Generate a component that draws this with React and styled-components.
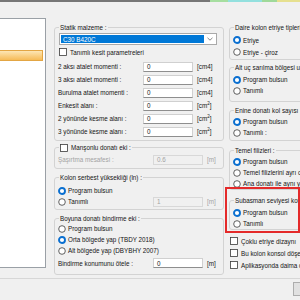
import React from "react"
import styled, { createGlobalStyle } from "styled-components"

const GlobalStyle = createGlobalStyle`
  * { box-sizing: border-box; }
  html, body { margin: 0; padding: 0; background: #f0f0f0; }
  body { font-family: "Liberation Sans", Arial, sans-serif; }
`

const Screen = styled.div`
  width: 300px;
  height: 300px;
  overflow: hidden;
  background: #f0f0f0;
  font-size: 6.3px;
  color: #141414;
  display: flex;
  flex-direction: column;
`

const TopStrip = styled.div`
  display: flex;
  height: 2px;
  flex: none;
`

const StripSeg = styled.div`
  width: ${p => p.$w}px;
  background: ${p => p.$c};
  flex: none;
`

const Body = styled.div`
  display: flex;
  align-items: flex-start;
  height: 276px;
  flex: none;
`

const TreeList = styled.div`
  width: 46px;
  height: 250px;
  margin-top: 16px;
  background: #fff;
  border: 1px solid #9aa0a6;
  border-left: none;
  flex: none;
`

const TreeItem = styled.div`
  width: 43px;
  height: 11px;
  margin-top: 31px;
  background: linear-gradient(#fde6b4, #f6bb57);
  border: 1px solid #e3a644;
  border-left: none;
`

const Column = styled.div`
  width: ${p => p.$w}px;
  margin-left: ${p => p.$ml}px;
  padding-top: 25px;
  flex: none;
  display: flex;
  flex-direction: column;
`

const Group = styled.div`
  border: 1px solid #d3d3d3;
  border-radius: 3px;
  padding: 0 3px ${p => p.$pb || 0}px;
  margin-top: ${p => p.$mt || 0}px;
  width: ${p => (p.$w ? `${p.$w}px` : "auto")};
`

const Legend = styled.div`
  display: flex;
  align-items: center;
  gap: 2px;
  width: fit-content;
  height: 7px;
  line-height: 7px;
  margin: -4px 0 0 ${p => p.$ml ?? 1}px;
  padding: 0 1px;
  background: #f0f0f0;
  white-space: nowrap;
`

const Rows = styled.div`
  margin-top: ${p => p.$mt || 0}px;
  display: flex;
  flex-direction: column;
`

const Row = styled.div`
  display: flex;
  align-items: center;
  height: ${p => p.$h || 11}px;
  white-space: nowrap;
  color: ${p => (p.$muted ? "#a3a3a3" : "inherit")};
  margin-left: ${p => p.$ml || 0}px;
`

const Label = styled.div`
  width: ${p => p.$w}px;
  flex: none;
  display: flex;
  align-items: center;
  gap: 2px;
`

const TextBox = styled.div`
  width: 50px;
  height: 10px;
  flex: none;
  display: flex;
  align-items: center;
  padding-left: 3px;
  background: ${p => (p.$disabled ? "#f0f0f0" : "#fff")};
  border: 1px solid ${p => (p.$disabled ? "#d8d8d8" : "#d0d0d0")};
  border-bottom-color: ${p => (p.$disabled ? "#d8d8d8" : "#8e8e8e")};
  color: ${p => (p.$disabled ? "#a3a3a3" : "#141414")};
`

const Unit = styled.div`
  margin-left: 4px;
  color: ${p => (p.$disabled ? "#a3a3a3" : "#141414")};
  sup {
    font-size: 4.5px;
    line-height: 0;
  }
`

const Select = styled.div`
  display: flex;
  width: 158px;
  height: 12px;
  margin: 2px 0 0 1px;
  padding: 1px;
  border: 1px solid #a9a9a9;
  background: #fff;
`

const SelectValue = styled.div`
  flex: 1;
  display: flex;
  align-items: center;
  padding-left: 2px;
  background: #0078d7;
  color: #fff;
`

const SelectArrow = styled.div`
  width: 11px;
  display: flex;
  align-items: center;
  justify-content: center;
`

const RedFrame = styled.div`
  width: 75px;
  margin: -3px 0 0 -4px;
  padding: 0 0 1px 2px;
  border: 2px solid #e42a2a;
  overflow: hidden;
`

const Footer = styled.div`
  flex: 1;
  border-top: 1px solid #d7d7d7;
  padding: 3px 0 0 293px;
`

const FooterButton = styled.div`
  width: 30px;
  height: 14px;
  border: 1px solid #adadad;
  background: #e1e1e1;
`

const Radio = ({ on }) => (
  <svg width="8" height="8" viewBox="0 0 8 8" style={{ flex: "none" }}>
    {on ? (
      <circle cx="4" cy="4" r="3" fill="#fff" stroke="#0a6fd0" strokeWidth="1.9" />
    ) : (
      <circle cx="4" cy="4" r="3.3" fill="#fff" stroke="#3a3a3a" strokeWidth="0.8" />
    )}
  </svg>
)

const Check = () => (
  <svg width="8" height="8" viewBox="0 0 8 8" style={{ flex: "none" }}>
    <rect x="0.5" y="0.5" width="7" height="7" fill="#fff" stroke="#3a3a3a" strokeWidth="0.8" />
  </svg>
)

const Chevron = () => (
  <svg width="6" height="4" viewBox="0 0 6 4">
    <polyline points="0.5,0.8 3,3.2 5.5,0.8" fill="none" stroke="#6a6a6a" strokeWidth="0.8" />
  </svg>
)

const Option = ({ on, children, h, ml }) => (
  <Row $h={h} $ml={ml}>
    <Label $w={120}>
      <Radio on={on} />
      <span>{children}</span>
    </Label>
  </Row>
)

const CheckOption = ({ children, h, ml }) => (
  <Row $h={h} $ml={ml}>
    <Label $w={120} style={{ gap: 3 }}>
      <Check />
      <span>{children}</span>
    </Label>
  </Row>
)

const valueRows = [
  ["2 aksı atalet momenti :", "cm", "4"],
  ["3 aksı atalet momenti :", "cm", "4"],
  ["Burulma atalet momenti :", "cm", "4"],
  ["Enkesit alanı :", "cm", "2"],
  ["2 yönünde kesme alanı :", "cm", "2"],
  ["3 yönünde kesme alanı :", "cm", "2"],
]

export default function App() {
  return (
    <>
      <GlobalStyle />
      <Screen>
        <TopStrip>
          <StripSeg $w={210} $c="#767676" />
          <StripSeg $w={18} $c="#a6dea0" />
          <StripSeg $w={34} $c="#93e0de" />
          <StripSeg $w={15} $c="#9fd99a" />
          <StripSeg $w={23} $c="#e6e08f" />
        </TopStrip>

        <Body>
          <TreeList>
            <TreeItem />
          </TreeList>

          <Column $w={170} $ml={8}>
            <Group $pb={2}>
              <Legend>Statik malzeme :</Legend>
              <Select>
                <SelectValue>C30 B420C</SelectValue>
                <SelectArrow>
                  <Chevron />
                </SelectArrow>
              </Select>
              <Rows $mt={2}>
                <CheckOption h={10} ml={1}>Tanımlı kesit parametreleri</CheckOption>
              </Rows>
              <Rows $mt={3}>
                {valueRows.map(([label, unit, pow]) => (
                  <Row key={label} $h={13}>
                    <Label $w={85}>{label}</Label>
                    <TextBox>0</TextBox>
                    <Unit>
                      [{unit}
                      {pow === "2" ? <sup>2</sup> : pow}]
                    </Unit>
                  </Row>
                ))}
              </Rows>
            </Group>

            <Group $mt={6} $pb={2}>
              <Legend style={{ gap: 3 }}>
                <Check />
                <span>Manşonlu donatı eki :</span>
              </Legend>
              <Rows $mt={2}>
                <Row $h={13} $muted>
                  <Label $w={95}>Şaşırtma mesafesi :</Label>
                  <TextBox $disabled>0.6</TextBox>
                  <Unit $disabled>[m]</Unit>
                </Row>
              </Rows>
            </Group>

            <Group $mt={8} $pb={2}>
              <Legend>Kolon serbest yüksekliği (ln) :</Legend>
              <Rows $mt={4}>
                <Option on>Program bulsun</Option>
                <Row $h={11}>
                  <Label $w={95}>
                    <Radio />
                    <span>Tanımlı</span>
                  </Label>
                  <TextBox $disabled>1</TextBox>
                  <Unit $disabled>[m]</Unit>
                </Row>
              </Rows>
            </Group>

            <Group $mt={8} $pb={5}>
              <Legend>Boyuna donatı bindirme eki :</Legend>
              <Rows $mt={1}>
                <Option>Program bulsun</Option>
                <Option on>Orta bölgede yap (TBDY 2018)</Option>
                <Option>Alt bölgede yap (DBYBHY 2007)</Option>
              </Rows>
              <Rows $mt={1}>
                <Row $h={12}>
                  <Label $w={95}>Bindirme konumunu ötele :</Label>
                  <TextBox>0</TextBox>
                  <Unit>[m]</Unit>
                </Row>
              </Rows>
            </Group>
          </Column>

          <Column $w={90} $ml={5}>
            <Group $pb={1}>
              <Legend>Daire kolon etriye tipleri</Legend>
              <Rows $mt={3}>
                <Option on h={12}>Etriye</Option>
                <Option h={12}>Etriye - çiroz</Option>
              </Rows>
            </Group>

            <Group $mt={7} $pb={5}>
              <Legend>Alt uç sarılma bölgesi uzunluğu</Legend>
              <Rows $mt={3}>
                <Option on>Program bulsun</Option>
                <Option>Tanımlı</Option>
              </Rows>
            </Group>

            <Group $mt={8} $pb={2}>
              <Legend>Enine donatı kol sayısı :</Legend>
              <Rows $mt={2}>
                <Option on>Program bulsun</Option>
                <Option>Tanımlı :</Option>
              </Rows>
            </Group>

            <Group $mt={9}>
              <Legend>Temel filizleri :</Legend>
              <Rows $mt={2}>
                <Option on>Program bulsun</Option>
                <Option>Temel filizlerini ayrı olarak</Option>
                <Option>Ana donatı ile aynı yap</Option>
              </Rows>
            </Group>

            <RedFrame>
              <Group $mt={11} $w={100}>
                <Legend>Subasman seviyesi kotu</Legend>
                <Rows $mt={3}>
                  <Option on>Program bulsun</Option>
                  <Option>Tanımlı</Option>
                </Rows>
              </Group>
            </RedFrame>

            <Rows $mt={2}>
              <CheckOption h={12} ml={1}>Çoklu etriye dizaynı</CheckOption>
              <CheckOption h={12} ml={1}>Bu kolon konsol döşeme taşıyor</CheckOption>
              <CheckOption h={12} ml={1}>Aplikasyonda daima dğ göster</CheckOption>
            </Rows>
          </Column>
        </Body>

        <Footer>
          <FooterButton />
        </Footer>
      </Screen>
    </>
  )
}
